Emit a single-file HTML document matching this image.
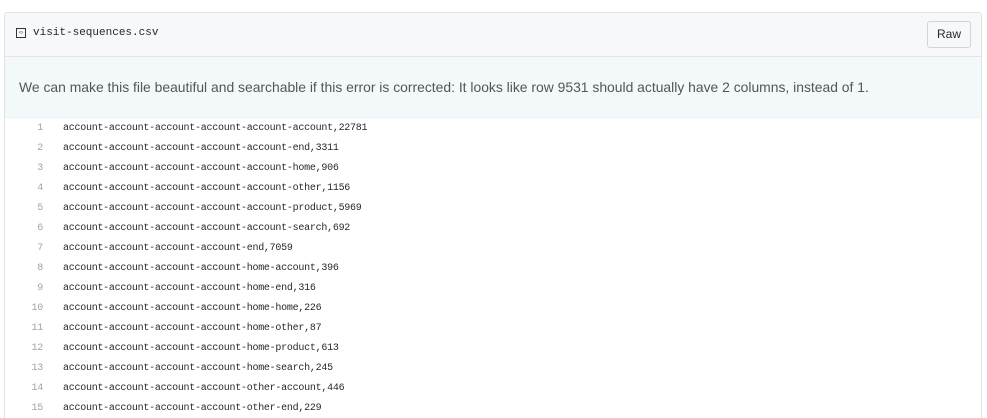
<!DOCTYPE html>
<html style="height:418px;overflow:hidden"><head><meta charset="utf-8"><style>
body{margin:0;background:#fff;width:987px;height:418px;overflow:hidden;position:relative;font-family:"Liberation Sans",sans-serif;}
.box{position:absolute;left:4px;top:12px;width:976px;height:415px;border:1px solid #dfe2e5;border-radius:3px;}
.hdr{height:43px;background:#f6f8fa;border-bottom:1px solid #e1e4e8;position:relative;}
.icon{position:absolute;left:11px;top:15px;width:8px;height:8px;border:1px solid #333;font-size:6px;line-height:8px;text-align:center;color:#333;}
.fname{position:absolute;left:28px;top:14px;font-family:"Liberation Mono",monospace;font-size:11px;color:#24292e;}
.raw{position:absolute;left:922px;top:8px;width:42px;height:25px;border:1px solid #d1d5da;border-radius:3px;background:#f7f8f9;font-size:12px;line-height:25px;text-align:center;color:#24292e;}
.err{height:60px;background:#f3f8fa;border-bottom:1px solid #eef1f3;font-size:13.9px;color:#555;line-height:60px;padding-left:14px;}
.code{padding-top:1px;font-family:"Liberation Mono",monospace;font-size:10px;letter-spacing:-0.26px;color:#24292e;}
.l{height:20px;line-height:20px;position:relative;}
.n{position:absolute;left:0;width:38px;text-align:right;color:#a3a3a3;}
.c{position:absolute;left:58px;}
</style></head><body>
<div class="box">
<div class="hdr"><div class="icon">‹›</div><div class="fname">visit-sequences.csv</div><div class="raw">Raw</div></div>
<div class="err">We can make this file beautiful and searchable if this error is corrected: It looks like row 9531 should actually have 2 columns, instead of 1.</div>
<div class="code">
<div class="l"><span class="n">1</span><span class="c">account-account-account-account-account-account,22781</span></div>
<div class="l"><span class="n">2</span><span class="c">account-account-account-account-account-end,3311</span></div>
<div class="l"><span class="n">3</span><span class="c">account-account-account-account-account-home,906</span></div>
<div class="l"><span class="n">4</span><span class="c">account-account-account-account-account-other,1156</span></div>
<div class="l"><span class="n">5</span><span class="c">account-account-account-account-account-product,5969</span></div>
<div class="l"><span class="n">6</span><span class="c">account-account-account-account-account-search,692</span></div>
<div class="l"><span class="n">7</span><span class="c">account-account-account-account-end,7059</span></div>
<div class="l"><span class="n">8</span><span class="c">account-account-account-account-home-account,396</span></div>
<div class="l"><span class="n">9</span><span class="c">account-account-account-account-home-end,316</span></div>
<div class="l"><span class="n">10</span><span class="c">account-account-account-account-home-home,226</span></div>
<div class="l"><span class="n">11</span><span class="c">account-account-account-account-home-other,87</span></div>
<div class="l"><span class="n">12</span><span class="c">account-account-account-account-home-product,613</span></div>
<div class="l"><span class="n">13</span><span class="c">account-account-account-account-home-search,245</span></div>
<div class="l"><span class="n">14</span><span class="c">account-account-account-account-other-account,446</span></div>
<div class="l"><span class="n">15</span><span class="c">account-account-account-account-other-end,229</span></div>
</div>
</div>
</body></html>
